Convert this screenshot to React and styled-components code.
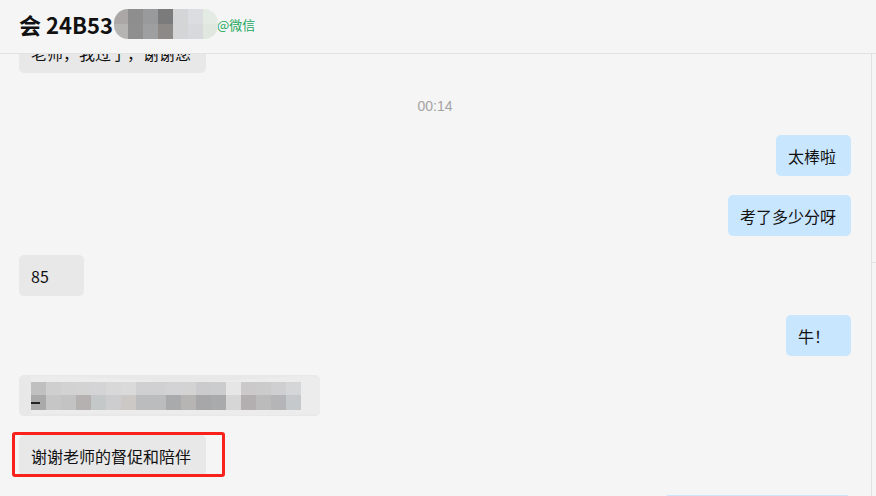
import React from "react";
import styled, { createGlobalStyle } from "styled-components";

const GlobalStyle = createGlobalStyle`
  html, body {
    margin: 0;
    padding: 0;
    height: 100%;
    background: #f5f5f5;
  }
  #root {
    height: 100%;
  }
  * {
    box-sizing: border-box;
  }
`;

const Window = styled.div`
  height: 100vh;
  display: flex;
  flex-direction: column;
  overflow: hidden;
  background: #f5f5f5;
  font-family: "Noto Sans CJK SC", "Microsoft YaHei", "Liberation Sans", sans-serif;
  color: #111;
`;

const Header = styled.div`
  height: 54px;
  flex: none;
  display: flex;
  align-items: center;
  padding: 0 0 6px 19px;
  border-bottom: 1px solid #e3e3e3;
  background: #f5f5f5;
  position: relative;
  z-index: 2;
`;

const Title = styled.div`
  font-size: 22px;
  font-weight: 700;
  color: #111;
  line-height: 1;
`;

const NameMask = styled.div`
  width: 104px;
  height: 30px;
  margin-left: 1px;
  border-radius: 14px;
  overflow: hidden;
  filter: blur(0.5px);
  svg {
    display: block;
  }
`;

const Source = styled.span`
  font-size: 13px;
  color: #22a85d;
  margin-left: -1px;
  margin-top: 2px;
`;

const Body = styled.div`
  flex: 1;
  display: flex;
  min-height: 0;
`;

const ChatArea = styled.div`
  flex: 1;
  overflow: hidden;
`;

const MessageList = styled.div`
  display: flex;
  flex-direction: column;
  gap: 19px;
  margin-top: -22px;
  padding: 0 20px 0 19px;
`;

const Row = styled.div`
  display: flex;
  justify-content: ${(p) => (p.$mine ? "flex-end" : "flex-start")};
`;

const Bubble = styled.div`
  position: relative;
  height: 41px;
  min-width: 65px;
  padding: 0 15px 0 12px;
  display: flex;
  align-items: center;
  border-radius: 5px;
  background: ${(p) => (p.$mine ? "#c9e6ff" : "#e8e8e8")};
  font-size: 16px;
  line-height: 1;
  white-space: nowrap;
  color: #111;
`;

const Highlight = styled.div`
  position: absolute;
  top: -3px;
  left: -7px;
  right: -19px;
  bottom: -1px;
  border: 3px solid #f8211c;
  border-radius: 3px;
  pointer-events: none;
`;

const TimeStamp = styled.div`
  padding-top: 4px;
  line-height: 20px;
  text-align: center;
  font-size: 14px;
  color: #a3a3a3;
  font-family: "Liberation Sans", "Noto Sans CJK SC", sans-serif;
`;

const ScrollTrack = styled.div`
  width: 5px;
  flex: none;
  border-left: 1px solid #e2e2e2;
`;

const ScrollThumb = styled.div`
  height: 209px;
  border-bottom: 1px solid #e2e2e2;
`;

const headerTop = ["#aaa7a6", "#8e8e8e", "#999a9b", "#7c7b7b", "#d4d5d7", "#dcdde0", "#e4eae4"];
const headerBottom = ["#b6b4b3", "#8f8f8f", "#9d9fa0", "#8c8987", "#d4d5d7", "#d8d9dc", "#dfe7df"];

const HeaderMosaic = () => (
  <svg width="104" height="30" viewBox="0 0 104 30">
    {headerTop.map((c, i) => (
      <rect key={"t" + i} x={i * 15 - 1} y="0" width="15" height="15" fill={c} />
    ))}
    {headerBottom.map((c, i) => (
      <rect key={"b" + i} x={i * 15 - 1} y="15" width="15" height="15" fill={c} />
    ))}
  </svg>
);

const mosaicTop = [
  "#c0c0c0", "#cfcfcf", "#d2d2d2", "#d3d3d3", "#d4d4d6", "#d8d8d9",
  "#dadada", "#d0d0d2", "#d0d0d2", "#d3d3d5", "#d3d3d4", "#cbcbcd",
  "#cbccce", "#e6e6e6", "#ccc9ca", "#cbcbcb", "#cfcfd1", "#d5d6d8",
];
const mosaicBottom = [
  "#aaaaaa", "#c6c6c6", "#c3c3c3", "#b5b1b0", "#c5c8c9", "#cdcdcf",
  "#cbc8c5", "#bbbcbe", "#bbbcbe", "#a9aaac", "#b7b5b3", "#a7a7a9",
  "#a9aaac", "#d6d6d6", "#b3afb0", "#bbbbbb", "#b5b5b7", "#c6c9cc",
];

const MaskedBubble = styled(Bubble)`
  width: 301px;
  padding: 0 0 0 12px;
  svg {
    display: block;
  }
`;

const TextMosaic = () => (
  <svg width="289" height="41" viewBox="0 0 289 41">
    <path
      d="M-12 2 C 60 -2, 120 10, 190 6 S 260 0, 289 2 L 289 39 C 220 42, 120 38, -12 39 Z"
      fill="#ececec"
    />
    {mosaicTop.map((c, i) => (
      <rect key={"t" + i} x={i * 15} y="7" width="15" height="13" fill={c} />
    ))}
    {mosaicBottom.map((c, i) => (
      <rect key={"b" + i} x={i * 15} y="20" width="15" height="15" fill={c} />
    ))}
    <rect x="0" y="27" width="9" height="2" fill="#222" />
  </svg>
);

const messages = [
  { id: 1, text: "老师，我过了，谢谢您" },
  { id: 2, time: "00:14" },
  { id: 3, mine: true, text: "太棒啦" },
  { id: 4, mine: true, text: "考了多少分呀" },
  { id: 5, text: "85" },
  { id: 6, mine: true, text: "牛！" },
  { id: 7, masked: true },
  { id: 8, text: "谢谢老师的督促和陪伴", marked: true },
  { id: 9, mine: true, text: "继续加油，下次更棒！" },
];

export default function App() {
  return (
    <>
      <GlobalStyle />
      <Window>
        <Header>
          <Title>会 24B53</Title>
          <NameMask>
            <HeaderMosaic />
          </NameMask>
          <Source>@微信</Source>
        </Header>
        <Body>
          <ChatArea>
            <MessageList>
              {messages.map((m) => {
                if (m.time) return <TimeStamp key={m.id}>{m.time}</TimeStamp>;
                if (m.masked)
                  return (
                    <Row key={m.id}>
                      <MaskedBubble>
                        <TextMosaic />
                      </MaskedBubble>
                    </Row>
                  );
                return (
                  <Row key={m.id} $mine={m.mine}>
                    <Bubble $mine={m.mine}>
                      {m.text}
                      {m.marked && <Highlight />}
                    </Bubble>
                  </Row>
                );
              })}
            </MessageList>
          </ChatArea>
          <ScrollTrack>
            <ScrollThumb />
          </ScrollTrack>
        </Body>
      </Window>
    </>
  );
}
